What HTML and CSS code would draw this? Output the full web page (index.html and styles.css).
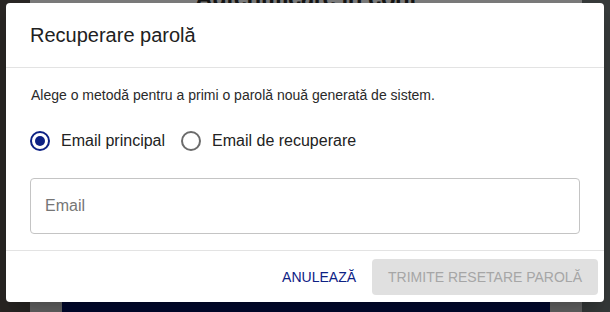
FILE: index.html
```html
<!DOCTYPE html>
<html lang="ro">
<head>
<meta charset="utf-8">
<title>Recuperare parolă</title>
<link rel="stylesheet" href="styles.css">
</head>
<body>
<div class="page">
  <div class="strip-left"></div>
  <div class="card">
    <h1 class="card-title">Autentificare în cont</h1>
    <div class="card-spacer"></div>
    <div class="card-bottom">
      <div class="card-btn"></div>
    </div>
  </div>
  <div class="strip-right"></div>
</div>

<div class="dialog" role="dialog" aria-labelledby="dlg-title">
  <header class="dialog-header">
    <h2 id="dlg-title" class="dialog-title">Recuperare parolă</h2>
  </header>
  <section class="dialog-content">
    <p class="dialog-text">Alege o metodă pentru a primi o parolă nouă generată de sistem.</p>
    <div class="radio-group">
      <label class="radio">
        <span class="radio-icon checked"></span>
        <span class="radio-label">Email principal</span>
      </label>
      <label class="radio">
        <span class="radio-icon"></span>
        <span class="radio-label">Email de recuperare</span>
      </label>
    </div>
    <div class="field">
      <span class="field-placeholder">Email</span>
    </div>
  </section>
  <footer class="dialog-actions">
    <button class="btn btn-text">ANULEAZĂ</button>
    <button class="btn btn-disabled" disabled>TRIMITE RESETARE PAROLĂ</button>
  </footer>
</div>
</body>
</html>
```

FILE: styles.css
```css
* { box-sizing: border-box; }
html, body {
  margin: 0;
  padding: 0;
  width: 610px;
  height: 312px;
  overflow: hidden;
}
body {
  background: #2b2826;
  font-family: "Liberation Sans", Arial, Helvetica, sans-serif;
  position: relative;
}
.page {
  display: flex;
  height: 312px;
}
.strip-left {
  width: 30px;
  background: #2a2725;
}
.strip-right {
  width: 28px;
  background: #373b3b;
}
.card {
  flex: 1;
  display: flex;
  flex-direction: column;
  background: #7b7b7b;
}
.card-title {
  margin: -14px 0 0 0;
  text-align: center;
  font-size: 24px;
  line-height: 24px;
  font-weight: 700;
  color: #151515;
  letter-spacing: -0.5px;
}
.card-spacer { flex: 1; }
.card-bottom {
  height: 10px;
  display: flex;
  background: #696969;
  padding-left: 32px;
  padding-right: 32px;
}
.card-btn {
  flex: 1;
  background: #000830;
}

.dialog {
  position: absolute;
  left: 6px;
  top: 3px;
  width: 598px;
  height: 299px;
  background: #ffffff;
  border-radius: 4px;
  display: flex;
  flex-direction: column;
  box-shadow: 0 11px 15px -7px rgba(0,0,0,0.2), 0 24px 38px 3px rgba(0,0,0,0.14);
}
.dialog-header {
  padding: 16px 24px;
  border-bottom: 1px solid #e3e3e3;
}
.dialog-title {
  margin: 0;
  font-size: 20px;
  line-height: 32px;
  font-weight: 400;
  color: #212121;
}
.dialog-content {
  flex: 1;
  padding: 19px 24px 0 24px;
  border-bottom: 1px solid #e3e3e3;
}
.dialog-text {
  margin: 0;
  font-size: 14px;
  line-height: 17px;
  color: #2a2a2a;
  padding-left: 1px;
}
.radio-group {
  display: flex;
  align-items: center;
  height: 42px;
  margin-top: 16px;
  gap: 16px;
}
.radio {
  display: flex;
  align-items: center;
  gap: 11px;
}
.radio-icon {
  width: 20px;
  height: 20px;
  border-radius: 50%;
  border: 2px solid #6b6b6b;
  display: flex;
  align-items: center;
  justify-content: center;
}
.radio-icon.checked {
  border-color: #0d2184;
}
.radio-icon.checked::after {
  content: "";
  width: 10px;
  height: 10px;
  border-radius: 50%;
  background: #0d2184;
}
.radio-label {
  font-size: 16px;
  line-height: 24px;
  color: #222222;
}
.field {
  margin-top: 16px;
  height: 56px;
  border: 1px solid #c4c4c4;
  border-radius: 4px;
  display: flex;
  align-items: center;
  padding-left: 14px;
}
.field-placeholder {
  font-size: 16px;
  color: #767676;
}
.dialog-actions {
  display: flex;
  justify-content: flex-end;
  align-items: center;
  gap: 8px;
  padding: 8px 6px 7px 8px;
}
.btn {
  font-family: "Liberation Sans", Arial, Helvetica, sans-serif;
  font-size: 14px;
  line-height: 24px;
  border: 0;
  border-radius: 4px;
  height: 36px;
  background: transparent;
}
.btn-text {
  color: #0d2184;
  padding: 6px 8px;
}
.btn-disabled {
  background: #e0e0e0;
  color: #a6a6a6;
  padding: 6px 16px;
}
```
